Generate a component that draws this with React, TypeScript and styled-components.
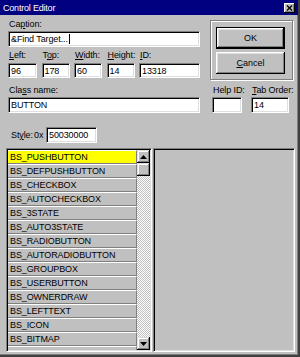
import React from "react";
import styled, { createGlobalStyle } from "styled-components";

const GlobalStyle = createGlobalStyle`
  html, body {
    margin: 0;
    padding: 0;
    background: #c0c0c0;
  }
  body {
    font-family: "Liberation Sans", Arial, sans-serif;
    font-size: 9px;
    color: #000;
  }
`;

const Window = styled.div`
  box-sizing: border-box;
  width: 300px;
  height: 357px;
  background: #c0c0c0;
  border-right: 2px solid #404040;
  border-bottom: 2px solid #404040;
  box-shadow: inset -1px -1px #808080;
  display: flex;
  flex-direction: column;
  overflow: hidden;
`;

const TitleBar = styled.div`
  height: 15px;
  flex: none;
  background: #000080;
  color: #fff;
  display: flex;
  align-items: center;
  justify-content: space-between;
  padding: 0 3px 0 3px;
  font-size: 9px;
  letter-spacing: -0.2px;
`;

const CloseButton = styled.div`
  box-sizing: border-box;
  width: 11px;
  height: 10px;
  background: #c0c0c0;
  box-shadow: inset -1px -1px #000, inset 1px 1px #fff, inset -2px -2px #808080;
  display: flex;
  align-items: center;
  justify-content: center;
`;

const Content = styled.div`
  padding: 4px 0 0 8px;
  display: flex;
  flex-direction: column;
`;

const TopGrid = styled.div`
  display: grid;
  grid-template-columns: 192px 83px;
  column-gap: 10px;
  row-gap: 5px;
  align-items: start;
`;

const Stack = styled.div`
  display: flex;
  flex-direction: column;
`;

const Field = styled.div<{ $w?: number; $gap?: number }>`
  display: flex;
  flex-direction: column;
  gap: ${(p) => p.$gap ?? 1}px;
  width: ${(p) => (p.$w ? `${p.$w}px` : "auto")};
`;

const Label = styled.span`
  display: block;
  height: 11px;
  line-height: 11px;
  padding-left: 1px;
  white-space: nowrap;
  letter-spacing: -0.1px;
`;

const TextBox = styled.div<{ $h: number; $w?: number }>`
  box-sizing: border-box;
  height: ${(p) => p.$h}px;
  width: ${(p) => (p.$w ? `${p.$w}px` : "auto")};
  background: #fff;
  border: 1px solid;
  border-color: #808080 #fff #fff #808080;
  box-shadow: inset 1px 1px #000, inset -1px -1px #dfdfdf;
  padding: 0 2px;
  display: flex;
  align-items: center;
  white-space: nowrap;
  overflow: hidden;
  letter-spacing: -0.1px;
`;

const Caret = styled.span`
  display: inline-block;
  width: 1px;
  height: 10px;
  background: #000;
  margin-left: 1px;
`;

const NumberRow = styled.div`
  margin-top: 3px;
  display: grid;
  grid-template-columns: 29px 28px 28px 28px 61px;
  justify-content: space-between;
`;

const GroupBox = styled.div`
  box-sizing: border-box;
  margin-top: 1px;
  height: 60px;
  border: 1px solid #808080;
  box-shadow: inset 1px 1px #fff, 1px 1px #fff;
  padding: 6px 7px 0 5px;
  display: flex;
  flex-direction: column;
  gap: 3px;
`;

const Button = styled.div<{ $default?: boolean }>`
  box-sizing: border-box;
  width: 69px;
  height: 22px;
  background: #c0c0c0;
  border: ${(p) => (p.$default ? "1px solid #000" : "none")};
  box-shadow: inset -1px -1px #000, inset 1px 1px #fff, inset -2px -2px #808080,
    inset 2px 2px #dfdfdf;
  display: flex;
  align-items: center;
  justify-content: center;
  font-size: 9px;
`;

const SmallFields = styled.div`
  display: flex;
  gap: 9px;
  padding-left: 2px;
`;

const StyleRow = styled.div`
  margin-top: 14px;
  height: 16px;
  display: flex;
  align-items: center;
`;

const StyleLabel = styled.span<{ $w: number; $pl?: number }>`
  box-sizing: border-box;
  width: ${(p) => p.$w}px;
  padding-left: ${(p) => p.$pl ?? 0}px;
  white-space: nowrap;
  letter-spacing: -0.1px;
`;

const BottomRow = styled.div`
  margin-top: 5px;
  margin-left: -2px;
  height: 204px;
  display: flex;
  gap: 1px;
`;

const Sunken = styled.div`
  box-sizing: border-box;
  border: 1px solid;
  border-color: #808080 #fff #fff #808080;
  box-shadow: inset 1px 1px #000, inset -1px -1px #dfdfdf;
  padding: 1px;
`;

const ListBox = styled(Sunken)`
  width: 146px;
  display: flex;
  overflow: hidden;
`;

const Items = styled.div`
  flex: 1;
  overflow: hidden;
`;

const Item = styled.div<{ $selected?: boolean }>`
  box-sizing: border-box;
  height: 14px;
  line-height: 12px;
  padding-left: 2px;
  background: ${(p) => (p.$selected ? "#ffff00" : "#c0c0c0")};
  border-top: 1px solid #fff;
  border-bottom: 1px solid #808080;
  border-right: 1px solid #808080;
  white-space: nowrap;
  letter-spacing: -0.1px;
`;

const ScrollBar = styled.div`
  width: 13px;
  display: flex;
  flex-direction: column;
`;

const ScrollButton = styled.div`
  box-sizing: border-box;
  width: 13px;
  height: 13px;
  flex: none;
  background: #c0c0c0;
  box-shadow: inset -1px -1px #000, inset 1px 1px #dfdfdf, inset -2px -2px #808080,
    inset 2px 2px #fff;
  display: flex;
  align-items: center;
  justify-content: center;
`;

const Track = styled.div`
  flex: 1;
  background: repeating-conic-gradient(#c0c0c0 0 25%, #fff 0 50%) 0 0 / 2px 2px;
`;

const Panel = styled(Sunken)`
  width: 142px;
  background: #c0c0c0;
`;

const styles = [
  "BS_PUSHBUTTON",
  "BS_DEFPUSHBUTTON",
  "BS_CHECKBOX",
  "BS_AUTOCHECKBOX",
  "BS_3STATE",
  "BS_AUTO3STATE",
  "BS_RADIOBUTTON",
  "BS_AUTORADIOBUTTON",
  "BS_GROUPBOX",
  "BS_USERBUTTON",
  "BS_OWNERDRAW",
  "BS_LEFTTEXT",
  "BS_ICON",
  "BS_BITMAP",
  "BS_LEFT",
];

const Arrow = ({ down }: { down?: boolean }) => (
  <svg width="7" height="4" viewBox="0 0 7 4">
    <polygon points={down ? "0,0 7,0 3.5,4" : "0,4 7,4 3.5,0"} fill="#000" />
  </svg>
);

const App = () => {
  return (
    <>
      <GlobalStyle />
      <Window>
        <TitleBar>
          <span>Control Editor</span>
          <CloseButton>
            <svg width="7" height="6" viewBox="0 0 7 6">
              <path d="M1 0.5 L6 5.5 M6 0.5 L1 5.5" stroke="#000" strokeWidth="1.4" />
            </svg>
          </CloseButton>
        </TitleBar>
        <Content>
          <TopGrid>
            <Stack>
              <Field>
                <Label>
                  Ca<u>p</u>tion:
                </Label>
                <TextBox $h={16}>
                  &amp;Find Target...
                  <Caret />
                </TextBox>
              </Field>
              <NumberRow>
                <Field $gap={2}>
                  <Label>
                    <u>L</u>eft:
                  </Label>
                  <TextBox $h={15}>96</TextBox>
                </Field>
                <Field $gap={2}>
                  <Label>
                    T<u>o</u>p:
                  </Label>
                  <TextBox $h={15}>178</TextBox>
                </Field>
                <Field $gap={2}>
                  <Label>
                    <u>W</u>idth:
                  </Label>
                  <TextBox $h={15}>60</TextBox>
                </Field>
                <Field $gap={2}>
                  <Label>
                    <u>H</u>eight:
                  </Label>
                  <TextBox $h={15}>14</TextBox>
                </Field>
                <Field $gap={2}>
                  <Label>
                    <u>I</u>D:
                  </Label>
                  <TextBox $h={15}>13318</TextBox>
                </Field>
              </NumberRow>
            </Stack>
            <GroupBox>
              <Button $default>OK</Button>
              <Button>
                <span>
                  <u>C</u>ancel
                </span>
              </Button>
            </GroupBox>
            <Field>
              <Label>
                Cla<u>s</u>s name:
              </Label>
              <TextBox $h={16}>BUTTON</TextBox>
            </Field>
            <SmallFields>
              <Field $w={30}>
                <Label>Help ID:</Label>
                <TextBox $h={16} />
              </Field>
              <Field $w={38}>
                <Label>
                  <u>T</u>ab Order:
                </Label>
                <TextBox $h={16}>14</TextBox>
              </Field>
            </SmallFields>
          </TopGrid>
          <StyleRow>
            <StyleLabel $w={26} $pl={3}>
              St<u>y</u>le:
            </StyleLabel>
            <StyleLabel $w={12}>0x</StyleLabel>
            <TextBox $h={16} $w={51}>
              50030000
            </TextBox>
          </StyleRow>
          <BottomRow>
            <ListBox>
              <Items>
                {styles.map((s, i) => (
                  <Item key={s} $selected={i === 0}>
                    {s}
                  </Item>
                ))}
              </Items>
              <ScrollBar>
                <ScrollButton>
                  <Arrow />
                </ScrollButton>
                <ScrollButton />
                <Track />
                <ScrollButton>
                  <Arrow down />
                </ScrollButton>
              </ScrollBar>
            </ListBox>
            <Panel />
          </BottomRow>
        </Content>
      </Window>
    </>
  );
};

export default App;
